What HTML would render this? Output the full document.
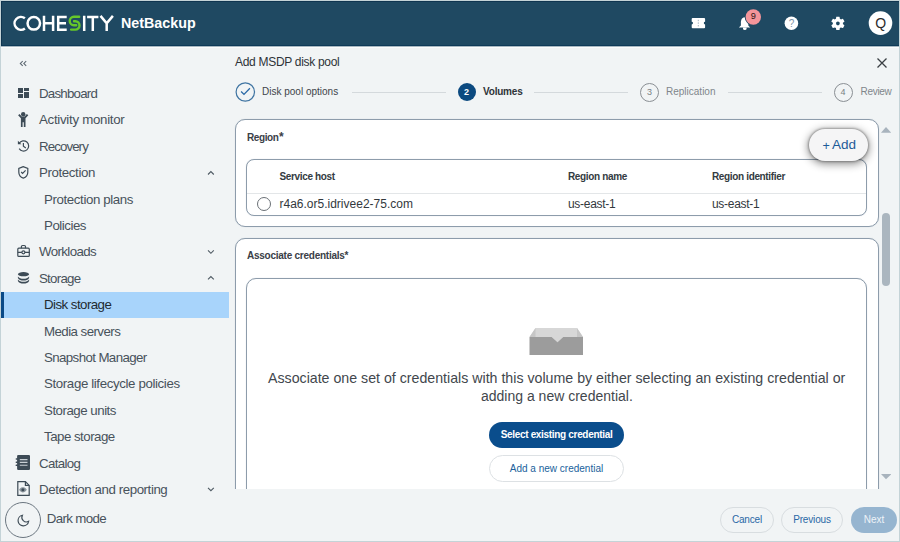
<!DOCTYPE html>
<html><head><meta charset="utf-8">
<style>
*{margin:0;padding:0;box-sizing:border-box}
html,body{width:900px;height:542px;overflow:hidden;background:#f1f4f5;font-family:"Liberation Sans",sans-serif}
.a{position:absolute;white-space:nowrap}
#frame{position:absolute;left:0;top:0;width:900px;height:542px;border:1px solid #c4d3d7;pointer-events:none;z-index:50}
#hdr{position:absolute;left:1px;top:1px;width:898px;height:45px;background:#1f4962;border-top:1px solid #0f3550;border-left:1px solid #0f3550;border-bottom:1px solid #0e3a58}
#hdrline{position:absolute;left:1px;top:46px;width:898px;height:1px;background:#f6f8f9}
.nav{position:absolute;left:39px;margin-top:0.7px;letter-spacing:-0.4px;font-size:13.3px;line-height:14px;color:#48525b;white-space:nowrap}
.sub{position:absolute;left:44px;margin-top:0.7px;letter-spacing:-0.4px;font-size:13.3px;line-height:14px;color:#48525b;white-space:nowrap}
.ico{position:absolute}
.card{position:absolute;background:#fff;border:1px solid #8d9cab;border-radius:10px;box-shadow:0 0 1px rgba(120,140,160,.35)}
.th{position:absolute;font-weight:bold;font-size:10px;letter-spacing:-0.35px;color:#333b42}
.td{position:absolute;font-size:12px;color:#33383d}
.btn{position:absolute;border-radius:14px;text-align:center}
</style></head><body>

<div id="hdr"></div>
<div class="a" style="left:1px;top:46px;width:898px;height:1px;background:#a9b9c2"></div><div class="a" style="left:1px;top:47px;width:898px;height:1px;background:#fbfcfc"></div>

<!-- logo -->
<svg class="ico" style="left:0;top:0" width="230" height="46" viewBox="0 0 230 46">
<g fill="none" stroke="#fff" stroke-width="2.5">
<path d="M24.9 18.3A6.4 6.4 0 1 0 24.9 28.4"/>
<circle cx="33.8" cy="23.35" r="6.25"/>
<path d="M44 15.7V31M53.1 15.7V31M44 23.3H53.1"/>
<path d="M66.7 16.9H58.2V29.8H66.7M58.2 23.3H66"/>
<path d="M84.2 15.7V31M87.1 16.9H98.4M92.8 16.9V31M100.5 15.9L106.7 23.2L112.9 15.9M106.7 23.2V31"/>
</g>
<path d="M79.2 16.8H73.9A4.2 4.2 0 0 0 73.9 25.2H76.2M74 21.2H75.3A4.2 4.2 0 0 1 75.3 29.6H71.1" fill="none" stroke="#66c72a" stroke-width="2.4" stroke-linecap="round"/>
</svg>
<div class="a" style="left:121px;top:14.8px;font-size:14.3px;font-weight:bold;color:#fff">NetBackup</div>

<!-- header icons -->
<svg class="ico" style="left:680px;top:0" width="220" height="46" viewBox="680 0 220 46">
<path d="M692.7 18.1H704.1A1 1 0 0 1 705.1 19.1V21.8A1.3 1.3 0 0 0 705.1 24.4V27.3A1 1 0 0 1 704.1 28.3H692.7A1 1 0 0 1 691.7 27.3V24.4A1.3 1.3 0 0 0 691.7 21.8V19.1A1 1 0 0 1 692.7 18.1Z" fill="#fff"/>
<path d="M698.3 19.8V21.2M698.3 22.4V23.8M698.3 25V26.4" stroke="#8aa0b0" stroke-width="0.8"/>
<path d="M744.6 17.2C741.5 17.5 740.9 20.5 740.9 23V25.5L738.9 27.6H750.2L748.3 25.5V23C748.3 20.5 747.6 17.5 744.6 17.2Z M743 27.8H746.6V28.8A1.8 1.2 0 0 1 743 28.8Z" fill="#fff"/>
<circle cx="753.3" cy="17" r="8.6" fill="#1f4962"/>
<circle cx="753.3" cy="17" r="7.7" fill="#f4959a"/>
<text x="753.3" y="19.4" font-family="Liberation Sans" font-size="9.2" fill="#2a1515" text-anchor="middle">9</text>
<circle cx="791.4" cy="23.2" r="6.8" fill="#fff"/>
<text x="791.5" y="26.8" font-family="Liberation Sans" font-size="10" fill="#7d93a6" text-anchor="middle">?</text>
<g transform="translate(829.5 15) scale(0.7)"><path fill="#fff" d="M19.14 12.94c.04-.3.06-.61.06-.94 0-.32-.02-.64-.07-.94l2.03-1.58a.49.49 0 0 0 .12-.61l-1.92-3.32a.488.488 0 0 0-.59-.22l-2.39.96c-.5-.38-1.03-.7-1.62-.94l-.36-2.54a.484.484 0 0 0-.48-.41h-3.840c-.24 0-.43.17-.47.41l-.36 2.54c-.59.24-1.130.57-1.620.94l-2.390-.96c-.22-.08-.47 0-.59.22L2.74 8.87c-.12.21-.08.47.12.61l2.03 1.58c-.05.3-.09.63-.09.94s.02.64.07.94l-2.03 1.58a.49.49 0 0 0-.12.61l1.92 3.32c.12.22.37.29.59.22l2.39-.96c.5.38 1.03.7 1.62.94l.36 2.54c.05.24.24.41.48.41h3.84c.24 0 .44-.17.47-.41l.36-2.54c.59-.24 1.13-.56 1.62-.94l2.39.96c.22.08.47 0 .59-.22l1.92-3.32c.12-.22.07-.47-.12-.61l-2.010-1.58zM12 14.6c-1.43 0-2.6-1.17-2.6-2.6s1.17-2.6 2.6-2.6 2.6 1.17 2.6 2.6-1.17 2.6-2.6 2.6z"/></g>
<circle cx="880.5" cy="23.1" r="11.8" fill="#fff"/>
<text x="880.6" y="28" font-family="Liberation Sans" font-size="14" fill="#2b2b2b" text-anchor="middle">Q</text>
</svg>

<!-- sidebar -->


<div class="nav" style="top:86.3px;letter-spacing:-0.77px">Dashboard</div>
<div class="nav" style="top:112.7px;letter-spacing:-0.29px">Activity monitor</div>
<div class="nav" style="top:139.1px;letter-spacing:-0.91px">Recovery</div>
<div class="nav" style="top:165.5px;letter-spacing:-0.39px">Protection</div>
<div class="sub" style="top:191.9px;letter-spacing:-0.39px">Protection plans</div>
<div class="sub" style="top:218.3px;letter-spacing:-0.48px">Policies</div>
<div class="nav" style="top:244.7px;letter-spacing:-0.61px">Workloads</div>
<div class="nav" style="top:271.1px;letter-spacing:-0.75px">Storage</div>
<div class="a" style="left:1px;top:292px;width:228px;height:26px;background:#a8d4fb;border-left:3px solid #0a4a87"></div>
<div class="sub" style="top:297.5px;color:#222a30;letter-spacing:-0.55px">Disk storage</div>
<div class="sub" style="top:323.9px;letter-spacing:-0.56px">Media servers</div>
<div class="sub" style="top:350.3px;letter-spacing:-0.61px">Snapshot Manager</div>
<div class="sub" style="top:376.7px;letter-spacing:-0.38px">Storage lifecycle policies</div>
<div class="sub" style="top:403.1px;letter-spacing:-0.49px">Storage units</div>
<div class="sub" style="top:429.5px;letter-spacing:-0.51px">Tape storage</div>
<div class="nav" style="top:455.9px;letter-spacing:-0.67px">Catalog</div>
<div class="nav" style="top:482.3px;letter-spacing:-0.43px">Detection and reporting</div>

<div class="a" style="left:5px;top:502px;width:36px;height:36px;border-radius:50%;border:1px solid #6b7680"></div>
<div class="a" style="left:46.7px;top:511.3px;font-size:13.3px;letter-spacing:-0.63px;color:#48525b">Dark mode</div>

<!-- sidebar icons -->
<svg class="ico" style="left:0;top:46px" width="230" height="496" viewBox="0 46 230 496">
<g fill="none" stroke="#5b6670" stroke-width="1.05"><path d="M22.7 61.1L20.3 63.4L22.7 65.8M26.2 61.1L23.8 63.4L26.2 65.8"/></g>
<g fill="#3d4b56">
<path d="M18 88H23V93H18ZM18 94H23V98H18ZM24 88H29V91H24ZM24 92H29V98H24Z"/>
<circle cx="23.2" cy="114.2" r="2.2"/>
<path d="M18.1 115.3L19.5 114L21.8 116.6H24.6L26.9 114L28.3 115.3L25.5 118.3V127H23.8V122.3H22.6V127H20.9V118.3Z"/>
<path d="M17.9 140.8L21.4 144.3H17.9Z"/>

<ellipse cx="23.5" cy="274.2" rx="5.6" ry="2.1"/>
<path d="M17.9 276.5C19 278.2 21 278.8 23.5 278.8C26 278.8 28 278.2 29.1 276.5V278.1C28.2 280 26 280.6 23.5 280.6C21 280.6 18.8 280 17.9 278.1Z"/>
<path d="M17.9 279.4C19 281.1 21 281.7 23.5 281.7C26 281.7 28 281.1 29.1 279.4V281C28.2 282.9 26 283.5 23.5 283.5C21 283.5 18.8 282.9 17.9 281Z"/>
<rect x="17.1" y="454.9" width="12.9" height="15" rx="1.2"/>
<rect x="15.6" y="458.2" width="2.4" height="1.5" rx="0.7"/>
<rect x="15.6" y="461.4" width="2.4" height="1.5" rx="0.7"/>
<rect x="15.6" y="464.6" width="2.4" height="1.5" rx="0.7"/>
</g>
<g fill="none" stroke="#3d4b56" stroke-width="1.2">
<path d="M19.2 143.3A5.1 5.1 0 1 1 19.2 148.6"/><path d="M23.4 142.9V146.3L25.8 147.9"/>
<path d="M23.3 166.6L18.8 168.4V172C18.8 174.9 20.7 177.4 23.3 178.1C25.9 177.4 27.8 174.9 27.8 172V168.4Z"/>
<path d="M21.2 172L22.6 173.4L25.6 170.4"/>
<rect x="17.8" y="248.2" width="11.5" height="8.2" rx="1"/>
<path d="M21.4 248.2V246.7A1.2 1.2 0 0 1 22.6 245.5H24.3A1.2 1.2 0 0 1 25.5 246.7V248.2M17.8 252.3H21.9M24.9 252.3H29.3"/>
<circle cx="23.4" cy="252.3" r="1.5"/>
<path d="M17.8 481.6H25.4L29.2 485.4V495.4H17.8Z"/>
<path d="M25.4 481.6V485.4H29.2"/>
<path d="M19.1 489.8C20.3 487.8 21.6 487.2 22.9 487.2C24.2 487.2 25.6 487.8 26.8 489.8C25.6 491.8 24.2 492.4 22.9 492.4C21.6 492.4 20.3 491.8 19.1 489.8Z" fill="#8b959c" stroke="none"/>
<path d="M22.4 515.3A5.3 5.3 0 1 0 28.6 521.3A4.5 4.5 0 0 1 22.4 515.3Z" stroke-width="1.15"/>
</g>
<circle cx="22.9" cy="489.8" r="1.5" fill="#3d4b56"/>
<g fill="none" stroke="#c9d0d5" stroke-width="1.1"><path d="M19.8 459.6H27.5M19.8 462.4H27.5M19.8 465.2H27.5"/></g>
<g fill="none" stroke="#4f5a63" stroke-width="1.1">
<path d="M208 174.5L210.9 171.6L213.8 174.5"/>
<path d="M208 250.4L210.9 253.3L213.8 250.4"/>
<path d="M208 279.4L210.9 276.5L213.8 279.4"/>
<path d="M208 487.8L210.9 490.7L213.8 487.8"/>
</g>
</svg>

<!-- main -->
<div class="a" style="left:235px;top:54.5px;font-size:12px;letter-spacing:-0.3px;color:#2e3338">Add MSDP disk pool</div>
<svg class="ico" style="left:877px;top:57.5px" width="10" height="10" viewBox="0 0 10 10"><path d="M0.5 0.5L9.5 9.5M9.5 0.5L0.5 9.5" stroke="#3a3f44" stroke-width="1.3"/></svg>

<!-- stepper -->
<svg class="ico" style="left:230px;top:77px" width="30" height="30" viewBox="230 77 30 30"><circle cx="245.3" cy="92" r="9.2" fill="none" stroke="#3f74a2" stroke-width="1.2"/><path d="M241.1 91.5L244 94.4L249.9 88.3" fill="none" stroke="#2a69a6" stroke-width="1.3"/></svg>
<div class="a" style="left:262px;top:86px;font-size:10px;color:#3d444a">Disk pool options</div>
<div class="a" style="left:352px;top:92px;width:94px;height:1px;background:#d4d9dc"></div>
<div class="a" style="left:457.5px;top:83px;width:18px;height:18px;border-radius:50%;background:#0c4a80;color:#fff;font-size:9px;font-weight:bold;text-align:center;line-height:18px">2</div>
<div class="a" style="left:483px;top:86px;font-size:10px;letter-spacing:-0.2px;font-weight:bold;color:#2e3338">Volumes</div>
<div class="a" style="left:534px;top:92px;width:94px;height:1px;background:#d4d9dc"></div>
<div class="a" style="left:640px;top:82.5px;width:19px;height:19px;border-radius:50%;border:1px solid #8a8f94;color:#7a7f84;font-size:9px;text-align:center;line-height:17px">3</div>
<div class="a" style="left:666px;top:86px;font-size:10px;color:#80868b">Replication</div>
<div class="a" style="left:728px;top:92px;width:94px;height:1px;background:#d4d9dc"></div>
<div class="a" style="left:833.5px;top:82.5px;width:19px;height:19px;border-radius:50%;border:1px solid #8a8f94;color:#7a7f84;font-size:9px;text-align:center;line-height:17px">4</div>
<div class="a" style="left:860.5px;top:86px;font-size:10px;letter-spacing:-0.3px;color:#80868b">Review</div>

<!-- region card -->
<div class="card" style="left:235px;top:119px;width:644px;height:108px"></div>
<div class="a" style="left:247px;top:131.9px;font-size:10px;letter-spacing:-0.4px;font-weight:bold;color:#3a4047">Region</div><div class="a" style="left:279px;top:130.2px;font-size:12px;font-weight:bold;color:#3a4047">*</div>
<div class="card" style="left:246px;top:159px;width:621px;height:57px;border-radius:8px"></div>
<div class="a" style="left:247px;top:193px;width:619px;height:1px;background:#e3e6e8"></div>
<div class="th" style="left:279.5px;top:171px">Service host</div>
<div class="th" style="left:568px;top:171px">Region name</div>
<div class="th" style="left:712px;top:171px">Region identifier</div>
<div class="a" style="left:256.5px;top:197px;width:14px;height:14px;border-radius:50%;border:1px solid #6a7076"></div>
<div class="td" style="left:279.5px;top:197px">r4a6.or5.idrivee2-75.com</div>
<div class="td" style="left:568px;top:197px;letter-spacing:-0.3px">us-east-1</div>
<div class="td" style="left:712px;top:197px;letter-spacing:-0.3px">us-east-1</div>
<div class="btn" style="left:809px;top:129px;width:59px;height:32px;border-radius:16px;background:#f5f5f6;box-shadow:0 0 2px 1px rgba(0,0,0,.25),0 2px 8px 1px rgba(0,0,0,.45)"></div><div class="a" style="left:822.5px;top:138.8px;font-size:12.5px;line-height:14px;color:#1d5a98">+</div><div class="a" style="left:832px;top:137.3px;font-size:13.5px;line-height:16px;color:#1d5a98">Add</div>

<!-- scrollbar -->
<svg class="ico" style="left:880.7px;top:127px" width="10.2" height="6"><path d="M0 5.7L5 0L10.2 5.7Z" fill="#a8b3bd"/></svg>
<div class="a" style="left:882px;top:213px;width:8px;height:73px;border-radius:4px;background:#abb6bf"></div>
<svg class="ico" style="left:880.6px;top:473.9px" width="10.4" height="6"><path d="M0 0L5 5.2L10.4 0Z" fill="#a8b3bd"/></svg>

<!-- credentials card (clipped) -->
<div class="a" style="left:0;top:0;width:900px;height:489px;overflow:hidden">
  <div class="card" style="left:235px;top:238px;width:644px;height:300px"></div>
  <div class="a" style="left:247px;top:249.8px;font-size:10px;letter-spacing:-0.25px;font-weight:bold;color:#3a4047">Associate credentials*</div>
  <div class="card" style="left:246px;top:278px;width:621px;height:260px"></div>
</div>

<!-- empty tray -->
<svg class="ico" style="left:529px;top:327px" width="55" height="29" viewBox="0 0 55 29"><path d="M6.5 1H48L54 10H0.5Z" fill="#d7d7d7"/><path d="M6.5 1L0.5 10H6.5ZM48 1L54 10H48Z" fill="#c6c6c6"/><path d="M22 9.5L28.5 15.5L35 9.5Z" fill="#d7d7d7"/><path d="M0.5 10H22.7L28.5 15.2L34.2 10H54V28H0.5Z" fill="#9c9c9c"/></svg>

<div class="a" style="left:268px;top:370px;font-size:14.2px;color:#42474d">Associate one set of credentials with this volume by either selecting an existing credential or</div>
<div class="a" style="left:481px;top:388px;font-size:14px;color:#42474d">adding a new credential.</div>

<div class="btn" style="left:489px;top:422px;width:135px;height:26px;border-radius:13px;background:#0a4d8c;color:#fff;font-size:10px;letter-spacing:-0.32px;font-weight:bold;line-height:26px">Select existing credential</div>
<div class="btn" style="left:489px;top:455px;width:135px;height:27px;border-radius:13.5px;background:#fff;border:1px solid #dde1e4;color:#215f9c;font-size:10px;line-height:25px">Add a new credential</div>

<!-- footer buttons -->
<div class="btn" style="left:720px;top:507px;width:54px;height:26px;border-radius:13px;border:1px solid #d8dde0;color:#2a68a6;font-size:10px;letter-spacing:-0.15px;line-height:24px">Cancel</div>
<div class="btn" style="left:781px;top:507px;width:62px;height:26px;border-radius:13px;border:1px solid #d8dde0;color:#2a68a6;font-size:10px;letter-spacing:-0.15px;line-height:24px">Previous</div>
<div class="btn" style="left:851px;top:507px;width:46px;height:26px;border-radius:13px;background:#96b5d0;color:#eef3f8;font-size:10px;line-height:26px">Next</div>

<div id="frame"></div>
</body></html>
